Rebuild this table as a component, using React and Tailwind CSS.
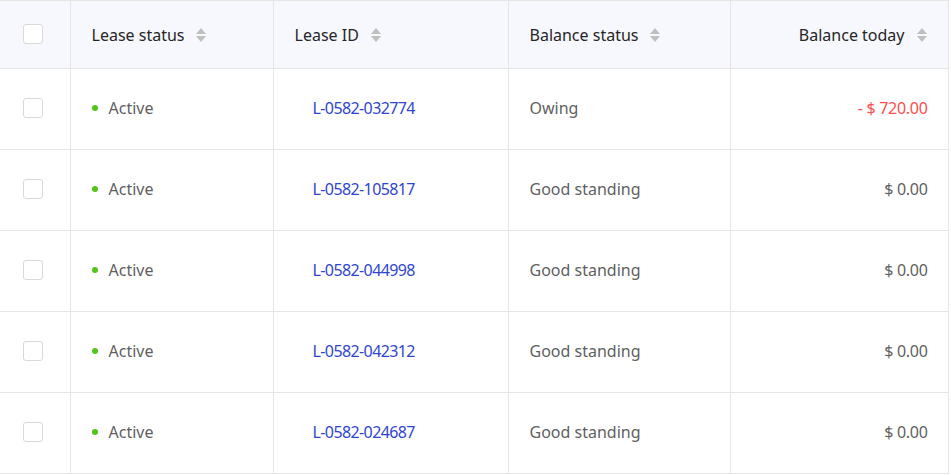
const rows = [
  { id: 'L-0582-032774', balanceStatus: 'Owing', balance: '- $ 720.00', owing: true },
  { id: 'L-0582-105817', balanceStatus: 'Good standing', balance: '$ 0.00' },
  { id: 'L-0582-044998', balanceStatus: 'Good standing', balance: '$ 0.00' },
  { id: 'L-0582-042312', balanceStatus: 'Good standing', balance: '$ 0.00' },
  { id: 'L-0582-024687', balanceStatus: 'Good standing', balance: '$ 0.00' },
];

const SortIcon = () => (
  <span className="inline-flex flex-col items-center gap-[2px] ml-3">
    <svg width="10" height="6" viewBox="0 0 10 6">
      <path d="M5 0 L10 6 L0 6 Z" fill="#bfbfbf" />
    </svg>
    <svg width="10" height="6" viewBox="0 0 10 6">
      <path d="M0 0 L10 0 L5 6 Z" fill="#bfbfbf" />
    </svg>
  </span>
);

const Checkbox = () => (
  <span className="block w-5 h-5 rounded-[3px] border border-[#d9d9d9] bg-white ml-[23px]" />
);

export default function App() {
  return (
    <div className="w-[951px] h-[475px] bg-white overflow-hidden" style={{ fontFamily: '"Noto Sans", sans-serif' }}>
      <table className="border-collapse table-fixed w-[948px] text-[16px]">
        <colgroup>
          <col className="w-[70px]" />
          <col className="w-[203px]" />
          <col className="w-[235px]" />
          <col className="w-[222px]" />
          <col className="w-[218px]" />
        </colgroup>
        <thead>
          <tr className="h-[68px] bg-[#f7f8fd] text-[#262626]">
            <th className="border border-[#e6e6e6] border-l-0 px-0 pb-[2px]">
              <Checkbox />
            </th>
            <th className="border border-[#e6e6e6] text-left font-normal pl-[21px]">
              <span className="inline-flex items-center">Lease status<SortIcon /></span>
            </th>
            <th className="border border-[#e6e6e6] text-left font-normal pl-[21px]">
              <span className="inline-flex items-center">Lease ID<SortIcon /></span>
            </th>
            <th className="border border-[#e6e6e6] text-left font-normal pl-[21px]">
              <span className="inline-flex items-center">Balance status<SortIcon /></span>
            </th>
            <th className="border border-[#e6e6e6] text-right font-normal pr-[21px]">
              <span className="inline-flex items-center">Balance today<SortIcon /></span>
            </th>
          </tr>
        </thead>
        <tbody>
          {rows.map((r) => (
            <tr key={r.id} className="h-[81px] text-[#5f5f5f]">
              <td className="border border-[#e6e6e6] border-l-0 pb-[2px]">
                <Checkbox />
              </td>
              <td className="border border-[#e6e6e6] pl-[21px] pb-[6px]">
                <span className="inline-flex items-center">
                  <span className="w-[6px] h-[6px] rounded-full bg-[#52c41a] mr-[11px]" />
                  Active
                </span>
              </td>
              <td className="border border-[#e6e6e6] pl-[39px] pb-[2px]">
                <span className="text-[#2f45d0] tracking-[-0.6px]">{r.id}</span>
              </td>
              <td className="border border-[#e6e6e6] pl-[21px] pb-[2px]">{r.balanceStatus}</td>
              <td className={`border border-[#e6e6e6] text-right pr-[20px] pb-[2px] tracking-[-0.3px] ${r.owing ? 'text-[#ff4d4f]' : ''}`}>
                {r.balance}
              </td>
            </tr>
          ))}
        </tbody>
      </table>
    </div>
  );
}
